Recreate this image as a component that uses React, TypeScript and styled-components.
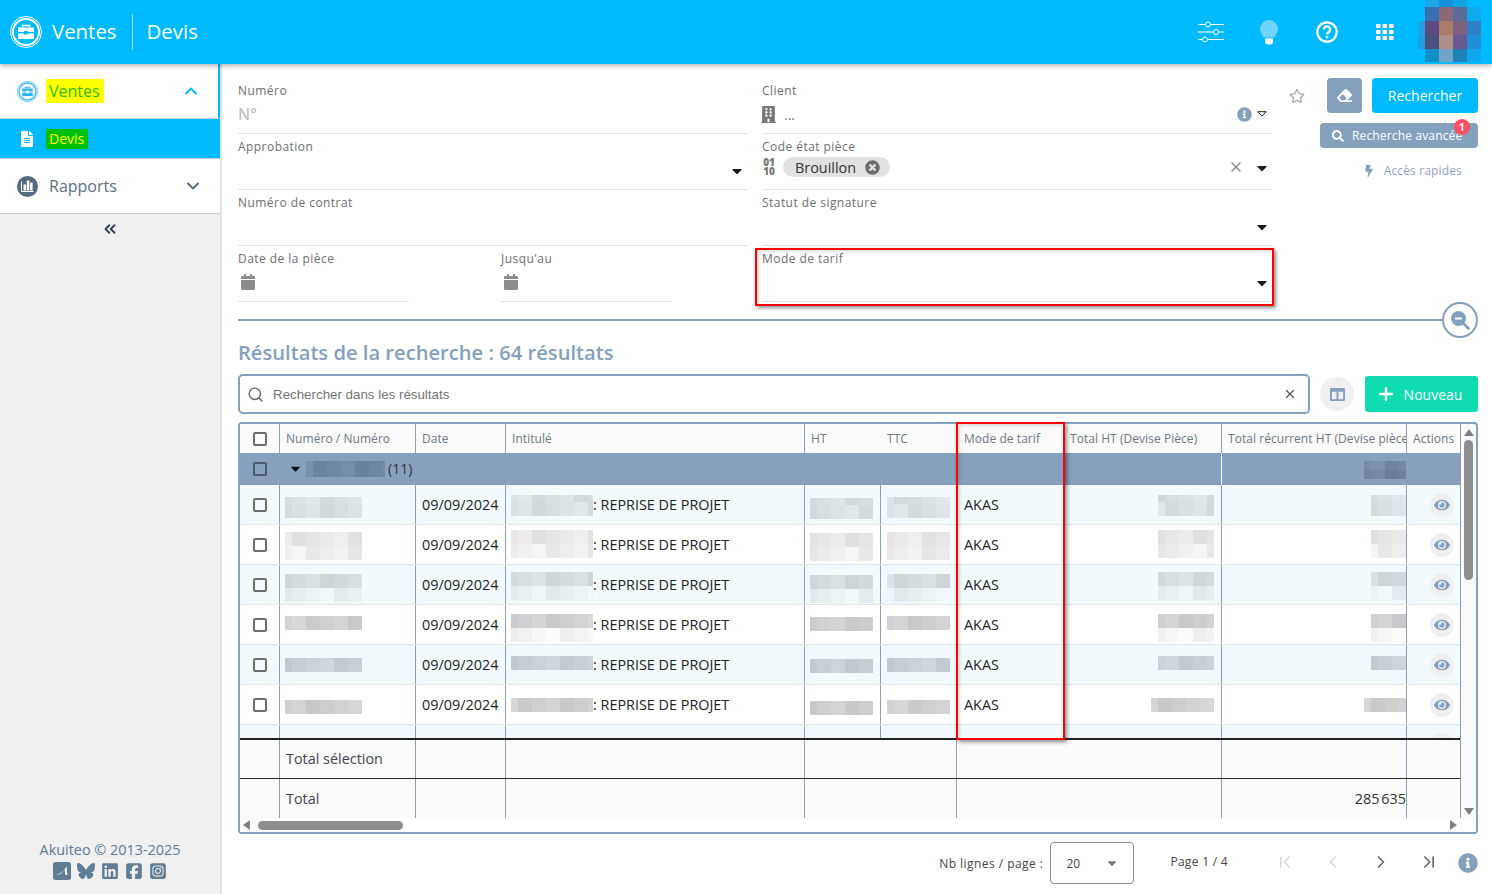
import React from 'react';
import styled, { createGlobalStyle } from 'styled-components';
import {
  FaBolt,
  FaBuilding,
  FaCalendar,
  FaCaretDown,
  FaColumns,
  FaEraser,
  FaEye,
  FaFileAlt,
  FaInfoCircle,
  FaRegStar,
  FaSearch,
  FaTimesCircle,
} from 'react-icons/fa';
import { FaBluesky, FaLinkedin, FaSquareFacebook, FaSquareInstagram } from 'react-icons/fa6';
import { ChevronDown, ChevronFirst, ChevronLast, ChevronLeft, ChevronRight, ChevronUp, ChevronsLeft, Plus, Search, X } from 'lucide-react';

const BLUE = '#00baff';
const STEEL = '#85a0bd';
const LINE = '#8ba1b9';
const COLUMNS = '40px 136px 90px 299px 76px 76px 107px 158px 185px 54px';

const GlobalStyle = createGlobalStyle`
  html, body {
    margin: 0;
    padding: 0;
    height: 100%;
    overflow: hidden;
    background: #fff;
    font-family: "Open Sans", "Liberation Sans", sans-serif;
  }
  * { box-sizing: border-box; }
`;

const Page = styled.div`
  width: 1492px;
  height: 894px;
  display: flex;
  flex-direction: column;
  overflow: hidden;
`;

const TopBar = styled.header`
  height: 64px;
  flex: none;
  display: flex;
  align-items: center;
  padding: 0 11px 0 10px;
  background: ${BLUE};
  color: #fff;
  box-shadow: 0 2px 5px rgba(0, 0, 0, 0.3);
  position: relative;
  z-index: 2;
`;

const TopTitle = styled.span`
  font-size: 20.4px;
  margin: -2px 0 0 10px;
`;

const TopDivider = styled.span`
  width: 1px;
  height: 36px;
  margin: 0 14px 0 15px;
  background: rgba(255, 255, 255, 0.6);
`;

const TopDevis = styled.span`
  font-size: 20.4px;
  margin-top: -2px;
`;

const TopIcons = styled.div`
  margin-left: auto;
  display: flex;
  align-items: center;
`;

const TopIcon = styled.span`
  width: 58px;
  display: flex;
  justify-content: center;
  align-items: center;
`;

const Avatar = styled.div`
  width: 63px;
  height: 62px;
  margin-left: 4px;
  align-self: flex-start;
  display: grid;
  grid-template-columns: 7px 14px 14px 14px 14px;
  grid-template-rows: 7px 14px 14px 14px 13px;
`;

const Body = styled.div`
  flex: 1;
  display: flex;
  min-height: 0;
`;

const Sidebar = styled.aside`
  width: 222px;
  flex: none;
  display: flex;
  flex-direction: column;
  background: #f0f0f0;
  border-right: 2px solid #e4e4e4;
`;

const NavRow = styled.div<{ $active?: boolean }>`
  height: 55px;
  display: flex;
  align-items: center;
  padding: 0 17px 0 17px;
  background: #fff;
  border-bottom: 1px solid #cfcfcf;
  border-right: ${(p) => (p.$active ? `2px solid ${BLUE}` : '0')};
`;

const NavHighlight = styled.span`
  margin-left: 8px;
  height: 24px;
  padding: 0 4px 0 3px;
  line-height: 24px;
  font-size: 16px;
  background: #ffff00;
  color: #2dbb00;
`;

const NavText = styled.span`
  margin-left: 11px;
  font-size: 16px;
  color: #5c6f80;
`;

const NavEnd = styled.span`
  margin-left: auto;
  display: flex;
`;

const SubRow = styled.div`
  height: 40px;
  display: flex;
  align-items: center;
  padding-left: 19px;
  background: ${BLUE};
  color: #fff;
  border-bottom: 1px solid #cfcfcf;
`;

const SubHighlight = styled.span`
  margin-left: 11px;
  height: 20px;
  padding: 0 4px 0 3px;
  line-height: 20px;
  font-size: 14px;
  background: #00c000;
  color: #ffff00;
`;

const Collapse = styled.div`
  height: 30px;
  display: flex;
  align-items: center;
  justify-content: center;
  color: #2f3f4f;
`;

const SideFooter = styled.footer`
  margin-top: auto;
  padding-bottom: 14px;
  text-align: center;
  font-size: 14.4px;
  color: #5c7b98;
`;

const Socials = styled.div`
  display: flex;
  justify-content: center;
  align-items: center;
  gap: 6px;
  margin-top: 3px;
  color: #5f7e96;
  font-size: 18px;
`;

const Main = styled.main`
  flex: 1;
  min-width: 0;
  padding: 14px 14px 0 16px;
  display: flex;
  flex-direction: column;
`;

const SearchArea = styled.section`
  display: flex;
  height: 224px;
  flex: none;
`;

const FormGrid = styled.div`
  width: 1034px;
  flex: none;
  display: grid;
  grid-template-columns: 509px 510px;
  grid-auto-rows: 56px;
  column-gap: 15px;
`;

const Field = styled.div`
  position: relative;
  border-bottom: 1px solid #e2e2e2;
  padding-top: 5px;
`;

const FieldLabel = styled.label`
  display: block;
  font-size: 12px;
  line-height: 16px;
  letter-spacing: 0.45px;
  color: #6e6e6e;
`;

const FieldValue = styled.div`
  height: 28px;
  margin-top: 1px;
  display: flex;
  align-items: center;
  font-size: 14px;
  color: #666;
`;

const ChipValue = styled(FieldValue)`
  margin-top: -2px;
`;

const Placeholder = styled.span`
  font-size: 16px;
  color: #b5b5b5;
`;

const ClientIcon = styled(FaBuilding)`
  font-size: 17px;
  margin-left: -2px;
  color: #777;
`;

const ClientDots = styled.span`
  margin-left: 7px;
  font-size: 14px;
  color: #777;
`;

const FieldEnd = styled.span`
  margin-left: auto;
  display: flex;
  align-items: center;
  gap: 10px;
  padding-right: 2px;
`;

const ClientEnd = styled(FieldEnd)`
  gap: 5px;
  padding-right: 5px;
`;

const Caret = styled(FaCaretDown)`
  font-size: 16px;
  margin-top: 2px;
  color: #1c1c1c;
`;

const DateIcon = styled(FaCalendar)`
  font-size: 16px;
  margin-left: 2px;
  color: #8c8c8c;
`;

const DateRow = styled.div`
  display: grid;
  grid-template-columns: 171px 170px;
  column-gap: 92px;
`;

const CodeIcon = styled.span`
  width: 14px;
  font-size: 10px;
  line-height: 9px;
  font-weight: 800;
  color: #777;
  text-align: center;
`;

const Chip = styled.span`
  margin-left: 7px;
  height: 20px;
  padding: 0 10px 0 12px;
  display: inline-flex;
  align-items: center;
  gap: 9px;
  border-radius: 10px;
  background: #e2e2e2;
  color: #333;
  font-size: 14.4px;
`;

const Actions = styled.div`
  width: 188px;
  margin-left: 18px;
  display: flex;
  flex-direction: column;
  align-items: flex-end;
`;

const ActionTop = styled.div`
  display: flex;
  align-items: center;
  width: 100%;
`;

const StarSlot = styled.span`
  display: flex;
  color: #aaa;
  margin: 0 22px 0 -1px;
`;

const EraseButton = styled.button`
  width: 35px;
  height: 35px;
  border: 0;
  border-radius: 4px;
  background: ${STEEL};
  color: #fff;
  display: flex;
  align-items: center;
  justify-content: center;
  padding: 0;
  margin-right: 10px;
`;

const SearchButton = styled.button`
  width: 106px;
  height: 35px;
  border: 0;
  border-radius: 4px;
  background: ${BLUE};
  color: #fff;
  font: 14px "Open Sans", sans-serif;
`;

const AdvancedButton = styled.button`
  position: relative;
  width: 158px;
  height: 25px;
  margin-top: 10px;
  border: 0;
  border-radius: 4px;
  background: ${STEEL};
  color: #fff;
  font: 12px "Open Sans", sans-serif;
  letter-spacing: 0.15px;
  display: flex;
  align-items: center;
  padding: 0 0 0 12px;
  gap: 8px;
`;

const Badge = styled.span`
  position: absolute;
  top: -4px;
  right: 8px;
  width: 16px;
  height: 16px;
  border-radius: 50%;
  background: #ff4d63;
  color: #fff;
  font-size: 10px;
  font-weight: 700;
  line-height: 16px;
  text-align: center;
`;

const QuickLinks = styled.div`
  margin-top: 14px;
  padding-right: 16px;
  display: flex;
  align-items: center;
  gap: 9px;
  font-size: 12px;
  letter-spacing: 0.15px;
  color: #8fa3b8;
`;

const RedBox = styled.div`
  position: absolute;
  border: 2px solid #f00;
  box-shadow: 2px 2px 4px rgba(0, 0, 0, 0.45), inset 2px 2px 3px rgba(0, 0, 0, 0.12);
  pointer-events: none;
  z-index: 1;
`;

const FieldRedBox = styled(RedBox)`
  top: 2px;
  left: -7px;
  right: -2px;
  bottom: -5px;
`;

const TableRedBox = styled(RedBox)`
  top: -2px;
  left: 716px;
  width: 109px;
  height: 318px;
`;

const DividerRow = styled.div`
  height: 36px;
  flex: none;
  display: flex;
  align-items: center;
`;

const DividerLine = styled.span`
  flex: 1;
  height: 2px;
  background: ${STEEL};
`;

const ZoomCircle = styled.span`
  width: 36px;
  height: 36px;
  border: 2px solid ${STEEL};
  border-radius: 50%;
  display: flex;
  align-items: center;
  justify-content: center;
`;

const ResultsTitle = styled.h2`
  margin: 0;
  height: 36px;
  flex: none;
  font-size: 20.16px;
  line-height: 29px;
  font-weight: 600;
  color: #85a0bd;
`;

const Toolbar = styled.div`
  height: 40px;
  flex: none;
  display: flex;
  align-items: center;
`;

const ResultSearch = styled.div`
  width: 1072px;
  height: 40px;
  border: 2px solid ${STEEL};
  border-radius: 5px;
  display: flex;
  align-items: center;
  padding: 0 11px 0 7px;
  font-family: "Liberation Sans", Arial, sans-serif;
  font-size: 13.33px;
  color: #747474;
  gap: 9px;
`;

const ClearSlot = styled.span`
  margin-left: auto;
  display: flex;
  color: #555;
`;

const ColumnsButton = styled.span`
  width: 34px;
  height: 34px;
  margin-left: 10px;
  border-radius: 50%;
  background: #f0f0f0;
  color: ${STEEL};
  display: flex;
  align-items: center;
  justify-content: center;
`;

const NewButton = styled.button`
  width: 113px;
  height: 36px;
  margin-left: 11px;
  border: 0;
  border-radius: 3px;
  background: #10dcb0;
  color: #fff;
  font: 14px "Open Sans", sans-serif;
  display: flex;
  align-items: center;
  justify-content: center;
  gap: 8px;
  padding: 0 5px 0 0;
`;

const TableFrame = styled.section`
  position: relative;
  height: 412px;
  flex: none;
  margin-top: 8px;
  border: 2px solid ${STEEL};
  border-radius: 4px;
  background: #fafafa;
  display: flex;
  flex-direction: column;
`;

const TableTop = styled.div`
  flex: 1;
  min-height: 0;
  display: flex;
`;

const Rows = styled.div`
  width: 1221px;
  flex: none;
  background: #fff;
  border-right: 1px solid ${STEEL};
`;

const Row = styled.div`
  display: grid;
  grid-template-columns: ${COLUMNS};
`;

const HeadRow = styled(Row)`
  height: 29px;
  background: #fafafa;
`;

const HeadCell = styled.div<{ $open?: boolean; $pad?: number }>`
  display: flex;
  align-items: center;
  padding-left: ${(p) => p.$pad ?? 6}px;
  font-size: 12px;
  white-space: nowrap;
  overflow: hidden;
  color: #6d7884;
  letter-spacing: 0.05px;
  border-right: ${(p) => (p.$open ? '0' : `1px solid ${LINE}`)};
`;

const CheckCell = styled.div<{ $line?: boolean }>`
  display: flex;
  align-items: center;
  justify-content: center;
  border-right: ${(p) => (p.$line === false ? '0' : `1px solid ${LINE}`)};
`;

const Box = styled.span<{ $dark?: boolean }>`
  width: 14px;
  height: 14px;
  border: 2px solid ${(p) => (p.$dark ? '#4d5a6a' : '#6e6e6e')};
  border-radius: 2px;
`;

const GroupRow = styled.div`
  display: grid;
  grid-template-columns: 40px 942px 185px 54px;
  height: 32px;
  background: #87a0bd;
  font-size: 14px;
  color: #333;
`;

const GroupName = styled.div`
  display: flex;
  align-items: center;
  padding: 0 0 2px 8px;
  gap: 3px;
  border-right: 1px solid #fff;
`;

const GroupEnd = styled.div`
  display: flex;
  align-items: center;
  justify-content: flex-end;
  border-right: 1px solid ${LINE};
`;

const DataRow = styled(Row)<{ $tint: boolean; $partial?: boolean }>`
  height: ${(p) => (p.$partial ? '13px' : '40px')};
  overflow: hidden;
  background: ${(p) => (p.$tint ? '#f2fafd' : '#fff')};
  border-bottom: ${(p) => (p.$partial ? '0' : '1px solid #dde6eb')};
`;

const Cell = styled.div<{ $end?: boolean; $pad?: number; $right?: number }>`
  display: flex;
  align-items: center;
  justify-content: ${(p) => (p.$end ? 'flex-end' : 'flex-start')};
  padding-left: ${(p) => p.$pad ?? 5}px;
  padding-right: ${(p) => p.$right ?? 0}px;
  font-size: 14.4px;
  color: #222;
  white-space: nowrap;
  overflow: hidden;
  border-right: 1px solid ${LINE};
`;

const ActionCell = styled.div<{ $partial?: boolean }>`
  display: flex;
  align-items: ${(p) => (p.$partial ? 'flex-start' : 'center')};
  justify-content: center;
  padding-top: ${(p) => (p.$partial ? '8px' : '0')};
  padding-left: 16px;
`;

const EyeButton = styled.span`
  width: 24px;
  height: 24px;
  flex: none;
  border-radius: 50%;
  background: #efefef;
  color: ${STEEL};
  display: flex;
  align-items: center;
  justify-content: center;
`;

const MosaicBlock = styled.div<{ $w: number; $top: number }>`
  width: ${(p) => p.$w}px;
  flex: none;
  align-self: flex-start;
  margin-top: ${(p) => p.$top}px;
  overflow: hidden;
`;

const MosaicStrip = styled.div<{ $h: number }>`
  height: ${(p) => p.$h}px;
  display: flex;
`;

const MosaicCell = styled.span<{ $w: number }>`
  width: ${(p) => p.$w}px;
  flex: none;
`;

const TotalRow = styled(Row)<{ $thick?: boolean; $h: number }>`
  height: ${(p) => p.$h}px;
  background: #fafafa;
  border-top: ${(p) => (p.$thick ? '2px' : '1px')} solid #222;
`;

const TotalCell = styled.div<{ $lift?: boolean }>`
  display: flex;
  align-items: center;
  padding: 0 0 ${(p) => (p.$lift ? '2px' : '0')} 6px;
  font-size: 14.4px;
  color: #3e4650;
  border-right: 1px solid ${LINE};
`;

const TotalValue = styled(TotalCell)`
  justify-content: flex-end;
  padding: 0;
  color: #333;
  white-space: nowrap;
`;

const TotalBlank = styled.div<{ $line?: boolean }>`
  border-right: ${(p) => (p.$line === false ? '0' : `1px solid ${LINE}`)};
`;

const VScroll = styled.div`
  flex: 1;
  display: flex;
  flex-direction: column;
  align-items: center;
  padding: 5px 0 3px;
`;

const VThumb = styled.span`
  width: 9px;
  height: 140px;
  margin-top: 4px;
  border-radius: 5px;
  background: #8e8e8e;
`;

const Arrow = styled.span<{ $dir: 'up' | 'down' | 'left' | 'right' }>`
  width: 0;
  height: 0;
  flex: none;
  border-style: solid;
  border-color: transparent;
  ${(p) => p.$dir === 'up' && 'border-width: 0 5px 7px; border-bottom-color: #808080;'}
  ${(p) => p.$dir === 'down' && 'border-width: 7px 5px 0; border-top-color: #808080; margin-top: auto;'}
  ${(p) => p.$dir === 'left' && 'border-width: 5px 7px 5px 0; border-right-color: #808080;'}
  ${(p) => p.$dir === 'right' && 'border-width: 5px 0 5px 7px; border-left-color: #808080; margin-left: auto;'}
`;

const HScroll = styled.div`
  height: 14px;
  flex: none;
  display: flex;
  align-items: center;
  padding: 0 19px 0 3px;
  background: #fff;
`;

const HThumb = styled.span`
  width: 145px;
  height: 9px;
  margin-left: 8px;
  border-radius: 5px;
  background: #8e8e8e;
`;

const Pager = styled.footer`
  flex: 1;
  display: flex;
  align-items: flex-start;
  padding-top: 8px;
  font-size: 12px;
  color: #444;
`;

const PagerLabel = styled.span`
  margin-left: auto;
  line-height: 44px;
  letter-spacing: 0.45px;
`;

const PageSelect = styled.div`
  width: 84px;
  height: 42px;
  margin-left: 7px;
  border: 1px solid #8d8d8d;
  border-radius: 4px;
  display: flex;
  align-items: center;
  justify-content: space-between;
  padding: 0 14px 0 15px;
  color: #444;
`;

const PageInfo = styled.span`
  margin-left: 36px;
  line-height: 40px;
  letter-spacing: 0.3px;
`;

const PageNav = styled.nav`
  margin-left: 33px;
  display: flex;
  height: 40px;
  align-items: center;
`;

const PageLink = styled.span<{ $disabled?: boolean }>`
  width: 48px;
  display: flex;
  justify-content: center;
  color: ${(p) => (p.$disabled ? '#d8d8d8' : '#666')};
`;

const PageHelp = styled.span`
  margin-left: 5px;
  margin-top: 11px;
  display: flex;
  color: ${STEEL};
`;

type Tone = number[];
type Strip = { h: number; tone: Tone };

// Anonymised values are 14px pixel blocks; the first column is cut in half
const cellShade = (tone: Tone, seed: number) => {
  const wave = (((seed * 37) % 7) - 3) * 2.5;
  return `rgb(${tone[0] + wave}, ${tone[1] + wave}, ${tone[2] + wave})`;
};

const Mosaic: React.FC<{ w: number; strips: Strip[]; top: number; seed: number }> = ({ w, strips, top, seed }) => {
  const count = Math.ceil((w + 7) / 14);
  return (
    <MosaicBlock $w={w} $top={top}>
      {strips.map((strip, s) => (
        <MosaicStrip key={s} $h={strip.h}>
          {Array.from({ length: count }, (_, i) => (
            <MosaicCell key={i} $w={i === 0 ? 7 : 14} style={{ background: cellShade(strip.tone, seed + i + s * 3) }} />
          ))}
        </MosaicStrip>
      ))}
    </MosaicBlock>
  );
};

const HeaderLogo: React.FC<{ size: number; color: string }> = ({ size, color }) => (
  <svg width={size} height={size} viewBox="0 0 32 32">
    <circle cx="16" cy="16" r="15.500" fill="none" stroke={color} strokeWidth="1" />
    <circle cx="16" cy="16" r="13" fill="none" stroke={color} strokeWidth="2" />
    <path d="M12.500 11V9.500h7V11" fill="none" stroke={color} strokeWidth="1.600" />
    <path d="M8 11.500h16v4.500h-6v-1h-4v1H8zM8 17.500h6v1h4v-1h6V23H8z" fill={color} />
  </svg>
);

const SlidersIcon = () => (
  <svg width="26" height="22" viewBox="0 0 26 22" fill="none" stroke="#fff" strokeWidth="1">
    <path d="M0 3.500h7.500M12.500 3.500H26M0 11h15.500M20.500 11H26M0 18.500h4.500M9.500 18.500H26" />
    <circle cx="10" cy="3.500" r="2.500" />
    <circle cx="18" cy="11" r="2.500" />
    <circle cx="7" cy="18.500" r="2.500" />
  </svg>
);

const BulbIcon = () => (
  <svg width="18" height="25" viewBox="0 0 18 25">
    <path d="M9 0a9 9 0 0 1 9 9c0 3.500-2.500 5.500-3.500 8.500h-11C2.500 14.500 0 12.500 0 9a9 9 0 0 1 9-9z" fill="#6fd4ff" />
    <path d="M5 18.500h8v3a3 3 0 0 1-3 3H8a3 3 0 0 1-3-3z" fill="#fff" />
  </svg>
);

const HelpIcon = () => (
  <svg width="22" height="22" viewBox="0 0 22 22" fill="none" stroke="#fff">
    <circle cx="11" cy="11" r="9.700" strokeWidth="2.200" />
    <path d="M7.800 8.500a3.200 3.200 0 1 1 4.800 2.800c-1 .6-1.600 1-1.600 2.200" strokeWidth="2.200" />
    <circle cx="11" cy="16.200" r="1.300" fill="#fff" stroke="none" />
  </svg>
);

const AppsIcon = () => (
  <svg width="18" height="16" viewBox="0 0 18 16" fill="#fff">
    {[0, 6, 12].map((y) =>
      [0, 6.500, 13].map((x) => <rect key={`${x}-${y}`} x={x} y={y} width="4.500" height="4" />),
    )}
  </svg>
);

const ReportsIcon = () => (
  <svg width="21" height="21" viewBox="0 0 21 21">
    <circle cx="10.500" cy="10.500" r="10.500" fill="#55697c" />
    <path d="M4.500 5.500v10h12" fill="none" stroke="#fff" strokeWidth="1" />
    <path d="M6.500 8.500h2.500v6H6.500zM9.800 4.500h2.500v10H9.800zM13.100 6.500h2.500v8h-2.500z" fill="#fff" />
  </svg>
);

const AkuiteoIcon = () => (
  <svg width="18" height="18" viewBox="0 0 18 18">
    <rect width="18" height="18" rx="2.500" fill="#5f7e96" />
    <path d="M3 13c4-.5 6.500-2 8.500-5.500.5 1.500.5 3.500 1 5.500h2c-.8-3-.8-6-.8-9-2 4-5 7.500-10.700 9z" fill="#fff" />
  </svg>
);

const OutlineCaret = () => (
  <svg width="10" height="6" viewBox="0 0 10 6">
    <path d="M.800.700h8.400L5 5.200z" fill="none" stroke="#222" strokeWidth="1" />
  </svg>
);

const ZoomOutIcon = () => (
  <svg width="20" height="20" viewBox="0 0 20 20">
    <circle cx="8.500" cy="8.500" r="7.500" fill={STEEL} />
    <path d="M5 8.500h7" stroke="#fff" strokeWidth="2" />
    <path d="M13.500 13.500l5 5" stroke={STEEL} strokeWidth="2.600" strokeLinecap="round" />
  </svg>
);

const avatarCells = [
  BLUE, '#1aa8e8', '#1492d8', '#14a4e4', BLUE,
  BLUE, '#3a6fb0', '#8a6a7a', '#5c6a98', '#10a8ee',
  '#1fa2e6', '#5c4a80', '#a87c6a', '#80607f', '#3080c8',
  '#1ea0e0', '#4c5080', '#aa9088', '#6a5890', '#2090d8',
  BLUE, '#1090c8', '#70a4c8', '#2080b8', '#10a8ec',
];

const headers = ['Numéro / Numéro', 'Date', 'Intitulé', 'HT', 'TTC', 'Mode de tarif', 'Total HT (Devise Pièce)', 'Total récurrent HT (Devise pièce)'];

const rows: { tint: boolean; top: number; strips: Strip[]; pale?: Tone }[] = [
  { tint: true, top: 12, strips: [{ h: 7, tone: [216, 224, 228] }, { h: 14, tone: [216, 224, 228] }] },
  { tint: false, top: 7, strips: [{ h: 14, tone: [232, 230, 230] }, { h: 14, tone: [238, 237, 237] }] },
  { tint: true, top: 9, strips: [{ h: 14, tone: [212, 220, 224] }, { h: 14, tone: [232, 240, 244] }] },
  { tint: false, top: 11, strips: [{ h: 14, tone: [208, 207, 209] }], pale: [243, 243, 243] },
  { tint: true, top: 13, strips: [{ h: 14, tone: [198, 208, 213] }] },
  { tint: false, top: 15, strips: [{ h: 14, tone: [208, 207, 208] }] },
];

const App: React.FC = () => {
  return (
    <Page>
      <GlobalStyle />
      <TopBar>
        <HeaderLogo size={32} color="#fff" />
        <TopTitle>Ventes</TopTitle>
        <TopDivider />
        <TopDevis>Devis</TopDevis>
        <TopIcons>
          <TopIcon><SlidersIcon /></TopIcon>
          <TopIcon><BulbIcon /></TopIcon>
          <TopIcon><HelpIcon /></TopIcon>
          <TopIcon><AppsIcon /></TopIcon>
        </TopIcons>
        <Avatar>
          {avatarCells.map((color, i) => (
            <span key={i} style={{ background: color }} />
          ))}
        </Avatar>
      </TopBar>
      <Body>
        <Sidebar>
          <NavRow $active>
            <HeaderLogo size={21} color="#2fb8f5" />
            <NavHighlight>Ventes</NavHighlight>
            <NavEnd><ChevronUp size={20} color={BLUE} strokeWidth={2.2} /></NavEnd>
          </NavRow>
          <SubRow>
            <FaFileAlt size={16} />
            <SubHighlight>Devis</SubHighlight>
          </SubRow>
          <NavRow>
            <ReportsIcon />
            <NavText>Rapports</NavText>
            <NavEnd><ChevronDown size={20} color="#52677c" strokeWidth={2.2} /></NavEnd>
          </NavRow>
          <Collapse><ChevronsLeft size={18} strokeWidth={2.4} /></Collapse>
          <SideFooter>
            Akuiteo © 2013-2025
            <Socials>
              <AkuiteoIcon />
              <FaBluesky />
              <FaLinkedin />
              <FaSquareFacebook />
              <FaSquareInstagram />
            </Socials>
          </SideFooter>
        </Sidebar>
        <Main>
          <SearchArea>
            <FormGrid>
              <Field>
                <FieldLabel>Numéro</FieldLabel>
                <FieldValue><Placeholder>N°</Placeholder></FieldValue>
              </Field>
              <Field>
                <FieldLabel>Client</FieldLabel>
                <FieldValue>
                  <ClientIcon />
                  <ClientDots>...</ClientDots>
                  <ClientEnd>
                    <FaInfoCircle size={15} color={STEEL} />
                    <OutlineCaret />
                  </ClientEnd>
                </FieldValue>
              </Field>
              <Field>
                <FieldLabel>Approbation</FieldLabel>
                <FieldValue><FieldEnd><Caret /></FieldEnd></FieldValue>
              </Field>
              <Field>
                <FieldLabel>Code état pièce</FieldLabel>
                <ChipValue>
                  <CodeIcon>01 10</CodeIcon>
                  <Chip>Brouillon<FaTimesCircle size={15} color="#6c6c6c" /></Chip>
                  <FieldEnd>
                    <X size={16} color="#8a8a8a" strokeWidth={2.2} />
                    <Caret />
                  </FieldEnd>
                </ChipValue>
              </Field>
              <Field>
                <FieldLabel>Numéro de contrat</FieldLabel>
                <FieldValue />
              </Field>
              <Field>
                <FieldLabel>Statut de signature</FieldLabel>
                <FieldValue><FieldEnd><Caret /></FieldEnd></FieldValue>
              </Field>
              <DateRow>
                <Field>
                  <FieldLabel>Date de la pièce</FieldLabel>
                  <FieldValue><DateIcon /></FieldValue>
                </Field>
                <Field>
                  <FieldLabel>Jusqu'au</FieldLabel>
                  <FieldValue><DateIcon /></FieldValue>
                </Field>
              </DateRow>
              <Field>
                <FieldLabel>Mode de tarif</FieldLabel>
                <FieldValue><FieldEnd><Caret /></FieldEnd></FieldValue>
                <FieldRedBox />
              </Field>
            </FormGrid>
            <Actions>
              <ActionTop>
                <StarSlot><FaRegStar size={16} /></StarSlot>
                <EraseButton aria-label="Effacer"><FaEraser size={15} /></EraseButton>
                <SearchButton>Rechercher</SearchButton>
              </ActionTop>
              <AdvancedButton>
                <FaSearch size={12} />
                Recherche avancée
                <Badge>1</Badge>
              </AdvancedButton>
              <QuickLinks>
                <FaBolt size={12} color="#85a0bd" />
                Accès rapides
              </QuickLinks>
            </Actions>
          </SearchArea>
          <DividerRow>
            <DividerLine />
            <ZoomCircle><ZoomOutIcon /></ZoomCircle>
          </DividerRow>
          <ResultsTitle>Résultats de la recherche : 64 résultats</ResultsTitle>
          <Toolbar>
            <ResultSearch>
              <Search size={17} color="#666" />
              Rechercher dans les résultats
              <ClearSlot><X size={14} strokeWidth={2.2} /></ClearSlot>
            </ResultSearch>
            <ColumnsButton><FaColumns size={15} /></ColumnsButton>
            <NewButton><Plus size={20} strokeWidth={3} />Nouveau</NewButton>
          </Toolbar>
          <TableFrame>
            <TableRedBox />
            <TableTop>
              <Rows>
                <HeadRow>
                  <CheckCell><Box /></CheckCell>
                  {headers.map((label) => (
                    <HeadCell key={label} $open={label === 'HT' || label === 'Mode de tarif'} $pad={label === 'Mode de tarif' ? 7 : 6}>
                      {label}
                    </HeadCell>
                  ))}
                  <HeadCell $open>Actions</HeadCell>
                </HeadRow>
                <GroupRow>
                  <CheckCell $line={false}><Box $dark /></CheckCell>
                  <GroupName>
                    <FaCaretDown size={15} color="#111" />
                    <Mosaic w={79} top={8} seed={3} strips={[{ h: 16, tone: [112, 136, 165] }]} />
                    (11)
                  </GroupName>
                  <GroupEnd>
                    <Mosaic w={42} top={8} seed={9} strips={[{ h: 9, tone: [116, 136, 163] }, { h: 9, tone: [112, 132, 160] }]} />
                  </GroupEnd>
                  <div />
                </GroupRow>
                {rows.map((row, i) => {
                  const withPale = row.pale ? [...row.strips, { h: 14, tone: row.pale }] : row.strips;
                  return (
                    <DataRow key={i} $tint={row.tint}>
                      <CheckCell><Box /></CheckCell>
                      <Cell><Mosaic w={77} top={row.top} strips={row.strips} seed={i * 5 + 1} /></Cell>
                      <Cell $pad={6}>09/09/2024</Cell>
                      <Cell>
                        <Mosaic w={82} top={row.top - 2} strips={withPale} seed={i * 3 + 2} />
                        : REPRISE DE PROJET
                      </Cell>
                      <Cell><Mosaic w={63} top={row.top + 1} strips={row.strips} seed={i * 7 + 4} /></Cell>
                      <Cell $pad={6}><Mosaic w={63} top={row.top} strips={row.strips} seed={i * 2 + 6} /></Cell>
                      <Cell $pad={7}>AKAS</Cell>
                      <Cell $end $right={7}>
                        <Mosaic w={i === 5 ? 63 : 56} top={row.top - 2} strips={withPale} seed={i * 4 + 7} />
                      </Cell>
                      <Cell $end>
                        <Mosaic w={i === 5 ? 42 : 35} top={row.top - 2} strips={withPale} seed={i * 6 + 8} />
                      </Cell>
                      <ActionCell><EyeButton><FaEye size={16} /></EyeButton></ActionCell>
                    </DataRow>
                  );
                })}
                <DataRow $tint $partial>
                  <CheckCell />
                  <Cell /><Cell /><Cell /><Cell /><Cell /><Cell /><Cell /><Cell />
                  <ActionCell $partial><EyeButton /></ActionCell>
                </DataRow>
                <TotalRow $thick $h={40}>
                  <TotalBlank />
                  <TotalCell $lift>Total sélection</TotalCell>
                  <TotalBlank />
                  <TotalBlank />
                  <TotalBlank $line={false} />
                  <TotalBlank />
                  <TotalBlank $line={false} />
                  <TotalBlank />
                  <TotalBlank />
                  <TotalBlank $line={false} />
                </TotalRow>
                <TotalRow $h={40}>
                  <TotalBlank />
                  <TotalCell>Total</TotalCell>
                  <TotalBlank />
                  <TotalBlank />
                  <TotalBlank $line={false} />
                  <TotalBlank />
                  <TotalBlank $line={false} />
                  <TotalBlank />
                  <TotalValue>{'285\u202f635'}</TotalValue>
                  <TotalBlank $line={false} />
                </TotalRow>
              </Rows>
              <VScroll>
                <Arrow $dir="up" />
                <VThumb />
                <Arrow $dir="down" />
              </VScroll>
            </TableTop>
            <HScroll>
              <Arrow $dir="left" />
              <HThumb />
              <Arrow $dir="right" />
            </HScroll>
          </TableFrame>
          <Pager>
            <PagerLabel>Nb lignes / page :</PagerLabel>
            <PageSelect>20<FaCaretDown size={14} color="#777" /></PageSelect>
            <PageInfo>Page 1 / 4</PageInfo>
            <PageNav>
              <PageLink $disabled><ChevronFirst size={20} /></PageLink>
              <PageLink $disabled><ChevronLeft size={20} /></PageLink>
              <PageLink><ChevronRight size={20} /></PageLink>
              <PageLink><ChevronLast size={20} /></PageLink>
            </PageNav>
            <PageHelp><FaInfoCircle size={20} /></PageHelp>
          </Pager>
        </Main>
      </Body>
    </Page>
  );
};

export default App;
